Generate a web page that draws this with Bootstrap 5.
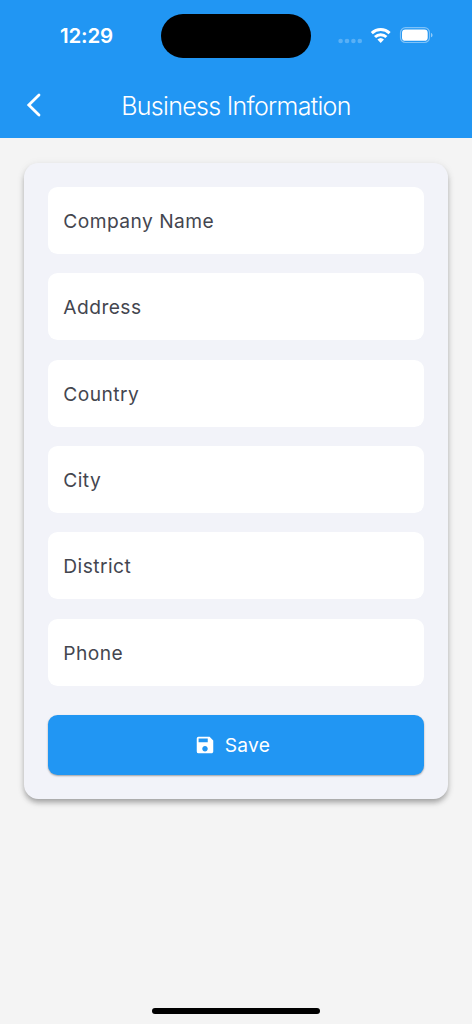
<!DOCTYPE html>
<html lang="en">
<head>
<meta charset="utf-8">
<meta name="viewport" content="width=device-width, initial-scale=1">
<title>Business Information</title>
<link href="https://cdn.jsdelivr.net/npm/bootstrap@5.3.0/dist/css/bootstrap.min.css" rel="stylesheet">
<style>
body{background:#f4f4f4;font-family:Inter,"Liberation Sans",sans-serif;min-height:1024px}
.app-header{background:#2196f3;height:138.4px}
.status-bar{height:72px}
.clock{width:161px;padding-left:60px;font-size:20.5px;font-weight:600;line-height:24px;letter-spacing:-.2px}
.island{width:150px;height:44px;margin-top:14px}
.status-icons{width:161px;padding-left:27px}
.title-bar{height:66.4px}
.back{width:60px;padding-left:25px}
.screen-title{font-size:25px;font-weight:300;letter-spacing:-.7px;line-height:30px;padding-top:1px}
.form-panel{background:#f2f3f9;border-radius:14.4px;margin:24.4px 24.3px 0;padding:24px 24px 24.2px;box-shadow:0 4px 5px -1px rgba(0,0,0,.22),0 4px 7px rgba(0,0,0,.12),0 1px 10px rgba(0,0,0,.06)}
.fields{gap:19.2px}
.field-box{height:67.2px;border-radius:9.6px;padding:2px 15px 0;color:#44464f;font-size:19.2px;letter-spacing:.45px;cursor:text}
.btn-save{--bs-btn-color:#fff;--bs-btn-bg:#2196f3;--bs-btn-hover-color:#fff;--bs-btn-hover-bg:#1e88e5;--bs-btn-border-radius:9.6px;height:60px;margin-top:28.8px;padding:0 20px 0 12px;font-size:19.2px;letter-spacing:.3px;border:0;box-shadow:0 1px 2px rgba(0,0,0,.35)}
.save-label{margin-left:9px;padding-top:1px}
.home-bar{width:168px;height:6px;margin-bottom:10px}
</style>
</head>
<body class="d-flex flex-column">
<header class="app-header text-white">
  <div class="status-bar d-flex">
    <div class="clock align-self-center">12:29</div>
    <div class="island bg-black rounded-pill"></div>
    <div class="status-icons">
      <svg width="100" height="72" viewBox="338 0 100 72" fill="#fff">
        <g opacity=".25"><circle cx="340.6" cy="41" r="2.3"/><circle cx="347" cy="41" r="2.3"/><circle cx="353.4" cy="41" r="2.3"/><circle cx="359.8" cy="41" r="2.3"/></g>
        <g fill="none" stroke="#fff" stroke-width="3"><path d="M371.8 33.1a13 13 0 0 1 17.8 0"/><path d="M375 37a8.2 8.2 0 0 1 11.4 0"/></g>
        <path d="M377.4 39.5a4.9 4.9 0 0 1 6.6 0L380.7 43z"/>
        <rect x="400.5" y="27.7" width="29" height="14.8" rx="5" fill="none" stroke="#fff" stroke-opacity=".42" stroke-width="1.2"/>
        <rect x="402" y="29.5" width="25.7" height="11.3" rx="3.4"/>
        <path d="M431 32.9c2 .7 2 3.7 0 4.4z" opacity=".5"/>
      </svg>
    </div>
  </div>
  <div class="title-bar d-flex align-items-center">
    <a href="#" class="back d-block" aria-label="Back">
      <svg class="d-block" width="18" height="26" viewBox="0 0 18 26"><path d="M14 3 3.8 13 14 23" fill="none" stroke="#fff" stroke-width="2.8" stroke-linecap="round" stroke-linejoin="miter"/></svg>
    </a>
    <h1 class="screen-title flex-grow-1 text-center m-0">Business Information</h1>
    <div class="back"></div>
  </div>
</header>
<main>
  <form class="form-panel">
    <div class="fields d-flex flex-column">
      <div class="field-box bg-white d-flex align-items-center">Company Name</div>
      <div class="field-box bg-white d-flex align-items-center">Address</div>
      <div class="field-box bg-white d-flex align-items-center">Country</div>
      <div class="field-box bg-white d-flex align-items-center">City</div>
      <div class="field-box bg-white d-flex align-items-center">District</div>
      <div class="field-box bg-white d-flex align-items-center">Phone</div>
    </div>
    <button type="button" class="btn btn-save w-100 d-flex align-items-center justify-content-center">
      <svg width="22" height="22" viewBox="0 0 24 24" fill="#fff"><path d="M17 3H5a2 2 0 0 0-2 2v14a2 2 0 0 0 2 2h14c1.1 0 2-.9 2-2V7l-4-4zm-5 16c-1.66 0-3-1.34-3-3s1.34-3 3-3 3 1.34 3 3-1.34 3-3 3zm3-10H5V5h10v4z"/></svg>
      <span class="save-label">Save</span>
    </button>
  </form>
</main>
<div class="home-bar bg-black rounded-pill mt-auto mx-auto"></div>
<script src="https://cdn.jsdelivr.net/npm/bootstrap@5.3.0/dist/js/bootstrap.bundle.min.js"></script>
</body>
</html>
